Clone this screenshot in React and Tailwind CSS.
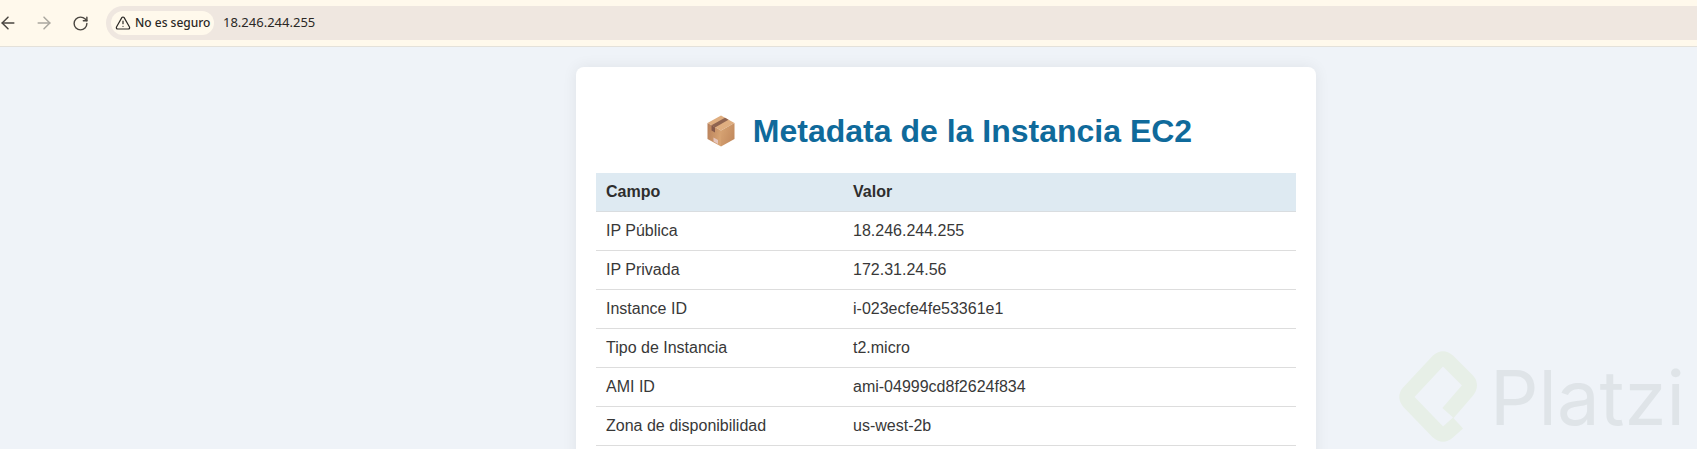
import { ArrowLeft, ArrowRight, RotateCw, TriangleAlert } from 'lucide-react'

const ROWS = [
  ['IP Pública', '18.246.244.255'],
  ['IP Privada', '172.31.24.56'],
  ['Instance ID', 'i-023ecfe4fe53361e1'],
  ['Tipo de Instancia', 't2.micro'],
  ['AMI ID', 'ami-04999cd8f2624f834'],
  ['Zona de disponibilidad', 'us-west-2b'],
]

function BoxIcon() {
  return (
    <svg width="28" height="32" viewBox="0 0 28 32" className="shrink-0">
      <defs>
        <linearGradient id="boxLeft" x1="0" y1="0" x2="1" y2="0.3">
          <stop offset="0" stopColor="#b8805a" />
          <stop offset="1" stopColor="#d6a272" />
        </linearGradient>
        <linearGradient id="boxRight" x1="0" y1="0" x2="1" y2="0.6">
          <stop offset="0" stopColor="#d9a675" />
          <stop offset="1" stopColor="#c28a5e" />
        </linearGradient>
      </defs>
      <path d="M14 0.5 L27.5 8 L14 15.5 L0.5 8 Z" fill="#dfae80" />
      <path d="M0.5 8 L14 15.5 V31.5 L0.5 24 Z" fill="url(#boxLeft)" />
      <path d="M27.5 8 L14 15.5 V31.5 L27.5 24 Z" fill="url(#boxRight)" />
      <path d="M4.5 10.2 L18 2.7 L21.5 4.7 L8 12.4 Z" fill="#8f6450" />
      <path d="M4.5 10.2 L8 12.4 V17.5 L4.5 15.5 Z" fill="#85594a" />
      <path d="M6.5 22.5 L11 25 V29 L6.5 26.5 Z" fill="#e6c6bd" />
    </svg>
  )
}

function PlatziMark() {
  return (
    <svg width="84" height="96" viewBox="0 0 84 96" fill="none" className="shrink-0">
      <path
        d="M51 64 L70 42 Q75 36 70 31 L51 12 Q46 8 41 12 L12 43 Q8 48 12 53 L41 83 Q46 87 51 83 L61 74"
        stroke="#e7efe7"
        strokeWidth="15"
        strokeLinejoin="round"
      />
    </svg>
  )
}

export default function App() {
  return (
    <div className="relative h-[449px] overflow-hidden bg-[#eff3f8] font-['Liberation_Sans',Arial,sans-serif]">
      {/* browser bar */}
      <div className="flex h-[47px] items-center border-b border-[#e4e1da] bg-[#fff9ec]">
        <div className="flex w-[106px] items-center text-[#4a4640]">
          <ArrowLeft size={20} strokeWidth={1.8} className="-ml-[2px]" />
          <ArrowRight size={20} strokeWidth={1.8} className="ml-[16px] text-[#aaa79f]" />
          <RotateCw size={17} strokeWidth={2} className="ml-[18px]" />
        </div>
        <div className="flex h-[34px] flex-1 items-center rounded-l-full bg-[#efe7e0] pl-[5px] font-['Noto_Sans',sans-serif] text-[12px] text-[#2a2825]">
          <div className="flex h-[24px] w-[103px] items-center gap-[4px] rounded-full bg-[#fff9ec] pl-[4px] font-medium">
            <TriangleAlert size={16} strokeWidth={1.8} />
            <span className="whitespace-nowrap">No es seguro</span>
          </div>
          <span className="ml-[9px] text-[13px]">18.246.244.255</span>
        </div>
      </div>

      {/* card */}
      <div className="ml-[576px] mt-[20px] w-[740px] rounded-[8px] bg-white px-[20px] pt-[45px] shadow-[0_0_15px_rgba(0,0,0,0.07)]">
        <h1 className="flex h-[37px] items-center justify-center gap-[18px] pl-[7px] text-[32px] font-bold text-[#0f6a9b]">
          <BoxIcon />
          <span>Metadata de la Instancia EC2</span>
        </h1>
        <table className="mt-[24px] w-[700px] border-collapse text-left text-[16px] text-[#383838]">
          <thead>
            <tr className="h-[38px] border-b border-[#d9dde0] bg-[#deeaf2] text-[#2e2e2e]">
              <th className="w-[247px] pl-[10px] pt-[1px] font-bold">Campo</th>
              <th className="pl-[10px] pt-[1px] font-bold">Valor</th>
            </tr>
          </thead>
          <tbody>
            {ROWS.map(([campo, valor]) => (
              <tr key={campo} className="h-[39px] border-b border-[#dddddd]">
                <td className="pl-[10px]">{campo}</td>
                <td className="pl-[10px]">{valor}</td>
              </tr>
            ))}
          </tbody>
        </table>
        <div className="h-[60px]" />
      </div>

      {/* watermark */}
      <div className="pointer-events-none absolute left-[1397px] top-[349px] flex items-start">
        <PlatziMark />
        <span className="ml-[9px] mt-[10px] font-['Inter',sans-serif] text-[76px] leading-none text-[#dfe4e8]">Platzi</span>
      </div>
    </div>
  )
}
